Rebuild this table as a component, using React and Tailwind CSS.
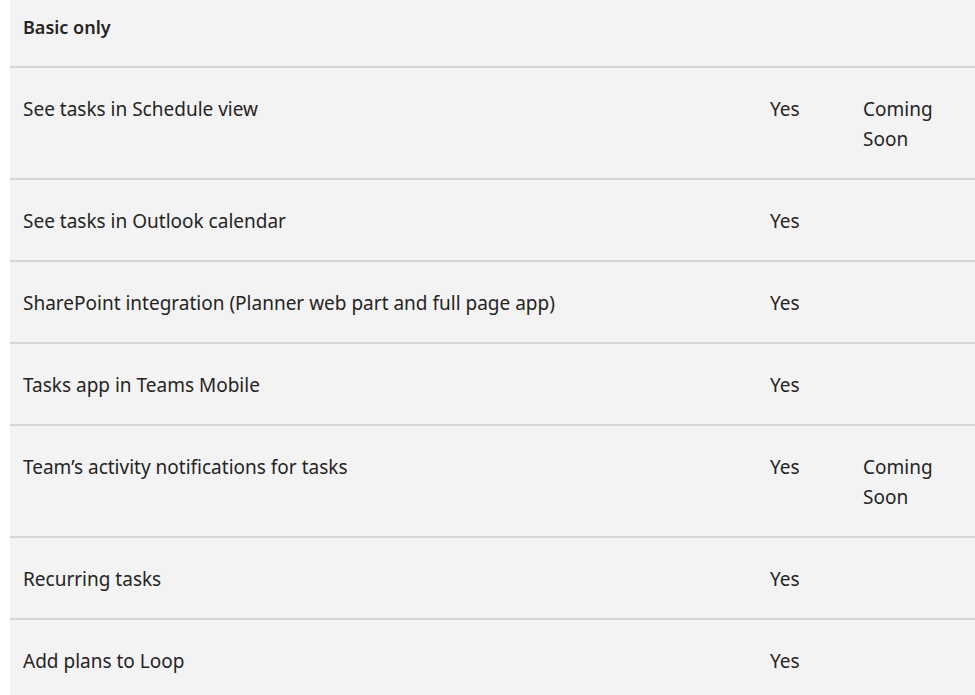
const rows = [
  { feature: 'See tasks in Schedule view', basic: 'Yes', premium: 'Coming Soon' },
  { feature: 'See tasks in Outlook calendar', basic: 'Yes' },
  { feature: 'SharePoint integration (Planner web part and full page app)', basic: 'Yes' },
  { feature: 'Tasks app in Teams Mobile', basic: 'Yes' },
  { feature: 'Team\u2019s activity notifications for tasks', basic: 'Yes', premium: 'Coming Soon' },
  { feature: 'Recurring tasks', basic: 'Yes' },
  { feature: 'Add plans to Loop', basic: 'Yes' },
];

export default function App() {
  return (
    <div
      className="min-h-[695px] bg-white pl-[10px] text-[#252423]"
      style={{ fontFamily: '"Noto Sans", "Open Sans", sans-serif' }}
    >
      <div className="min-h-[695px] bg-[#f3f3f3]">
        <div className="border-b-2 border-[#d6d6d6] pl-[13px] pt-[12px] pb-[24px] text-[18px] leading-[30px] font-semibold">
          Basic only
        </div>
        {rows.map((r, i) => (
          <div
            key={i}
            className="grid grid-cols-[747px_93px_1fr] border-b-2 border-[#d6d6d6] pt-[26px] pb-[24px] pl-[13px] text-[19px] leading-[30px] last:border-b-0"
          >
            <div>{r.feature}</div>
            <div>{r.basic}</div>
            <div className="w-[80px]">{r.premium}</div>
          </div>
        ))}
      </div>
    </div>
  );
}
